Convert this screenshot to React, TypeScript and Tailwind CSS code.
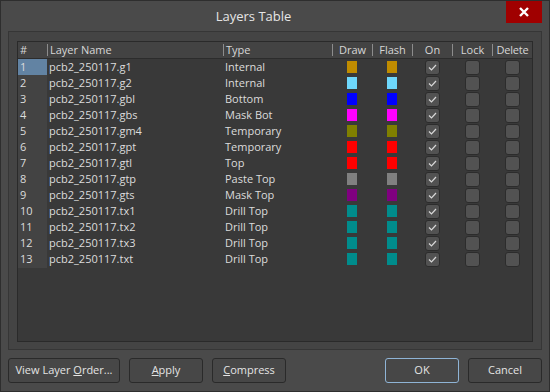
import React from "react";

const rows: [string, string, string][] = [
  ["pcb2_250117.g1", "Internal", "#c08c00"],
  ["pcb2_250117.g2", "Internal", "#6ed8fc"],
  ["pcb2_250117.gbl", "Bottom", "#0000ff"],
  ["pcb2_250117.gbs", "Mask Bot", "#ff00ff"],
  ["pcb2_250117.gm4", "Temporary", "#808000"],
  ["pcb2_250117.gpt", "Temporary", "#ff0000"],
  ["pcb2_250117.gtl", "Top", "#ff0000"],
  ["pcb2_250117.gtp", "Paste Top", "#808080"],
  ["pcb2_250117.gts", "Mask Top", "#800080"],
  ["pcb2_250117.tx1", "Drill Top", "#008c8c"],
  ["pcb2_250117.tx2", "Drill Top", "#008c8c"],
  ["pcb2_250117.tx3", "Drill Top", "#008c8c"],
  ["pcb2_250117.txt", "Drill Top", "#008c8c"],
];

const cols = "grid grid-cols-[29px_176px_109px_40px_40px_40px_40px_40px]";

function Sep() {
  return <div className="w-px h-[12px] bg-[#8c8c8c] shrink-0" />;
}

function Box({ checked }: { checked?: boolean }) {
  return (
    <div className="w-[15px] h-[15px] rounded-[3px] bg-[#525252] border border-[#2c2c2c] flex items-center justify-center">
      {checked && (
        <svg width="9" height="7" viewBox="0 0 9 7">
          <polyline points="1,3.5 3.5,6 8,1" fill="none" stroke="#d8d8d8" strokeWidth="1.2" />
        </svg>
      )}
    </div>
  );
}

function Btn({ children, w, primary }: { children: React.ReactNode; w: string; primary?: boolean }) {
  return (
    <button
      className={`${w} h-[25px] rounded-[3px] bg-[#474747] border ${
        primary ? "border-[#8fb4d6]" : "border-[#2a2a2a]"
      } text-[11px] text-[#e4e4e4] flex items-center justify-center whitespace-pre`}
    >
      {children}
    </button>
  );
}

export default function App() {
  return (
    <div
      className="w-[550px] h-[392px] bg-[#4a4a4a] border border-[#2e2e2e] flex flex-col text-[#dcdcdc] select-none"
      style={{ fontFamily: '"Open Sans", "Noto Sans", sans-serif' }}
    >
      <div className="flex h-[30px] shrink-0">
        <div className="flex-1 flex items-center justify-center text-[13px] text-[#e6e6e6] pt-[2px]">Layers Table</div>
        <div className="w-[36px] h-[22px] bg-[#a00000] flex items-center justify-center mr-[7px]">
          <svg width="10" height="10" viewBox="0 0 10 10">
            <path d="M1 1 L9 9 M9 1 L1 9" stroke="#ffffff" strokeWidth="2.4" />
          </svg>
        </div>
      </div>
      <div className="mx-[7px] h-[319px] bg-[#444444] border border-[#363636] pt-[9px] pl-[8px] pr-[9px]">
        <div className="w-[516px] h-[301px] bg-[#393939] border border-[#2a2a2a] flex flex-col">
          <div className={`${cols} h-[17px] bg-[#434343] border-b border-[#2c2c2c] text-[11px] text-[#d6d6d6] shrink-0`}>
            <div className="flex items-center pl-[2px]">#</div>
            <div className="flex items-center gap-[2px]"><Sep />Layer Name</div>
            <div className="flex items-center gap-[2px]"><Sep />Type</div>
            <div className="flex items-center"><Sep /><span className="flex-1 text-center">Draw</span></div>
            <div className="flex items-center"><Sep /><span className="flex-1 text-center">Flash</span></div>
            <div className="flex items-center"><Sep /><span className="flex-1 text-center">On</span></div>
            <div className="flex items-center"><Sep /><span className="flex-1 text-center">Lock</span></div>
            <div className="flex items-center"><Sep /><span className="flex-1 text-center tracking-[-0.2px]">Delete</span></div>
          </div>
          {rows.map(([name, type, color], i) => (
            <div key={name} className={`${cols} h-[16px] text-[11px] text-[#dcdcdc]`}>
              <div className={`flex items-center pl-[2px] ${i === 0 ? "bg-[#6283a3]" : "bg-[#434343]"}`}>{i + 1}</div>
              <div className="flex items-center pl-[2px]">{name}</div>
              <div className="flex items-center pl-[2px]">{type}</div>
              <div className="flex items-center justify-center"><div className="w-[10px] h-[12px]" style={{ backgroundColor: color }} /></div>
              <div className="flex items-center justify-center"><div className="w-[10px] h-[12px]" style={{ backgroundColor: color }} /></div>
              <div className="flex items-center justify-center"><Box checked /></div>
              <div className="flex items-center justify-center"><Box /></div>
              <div className="flex items-center justify-center"><Box /></div>
            </div>
          ))}
        </div>
      </div>
      <div className="flex mt-[8px] mx-[7px] gap-[9px]">
        <Btn w="w-[112px]">View Layer <span className="underline">O</span>rder...</Btn>
        <Btn w="w-[74px]"><span className="underline">A</span>pply</Btn>
        <Btn w="w-[74px]"><span className="underline">C</span>ompress</Btn>
        <div className="flex-1" />
        <Btn w="w-[74px]" primary>OK</Btn>
        <Btn w="w-[74px]">Cancel</Btn>
      </div>
    </div>
  );
}
